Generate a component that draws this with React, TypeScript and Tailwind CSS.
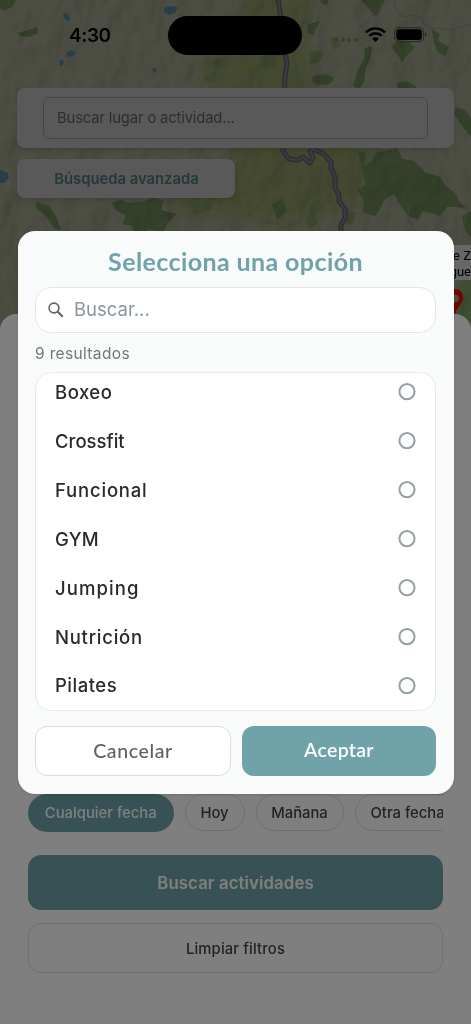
import React from 'react';

const options = ['Boxeo', 'Crossfit', 'Funcional', 'GYM', 'Jumping', 'Nutrición', 'Pilates'];

const optionSpacing: Record<string, string> = {
  Boxeo: 'tracking-[0.5px]',
  Crossfit: 'tracking-[0.02px]',
  Funcional: 'tracking-[0.8px]',
  GYM: 'tracking-[0.3px]',
  Jumping: 'tracking-[1.1px]',
  Nutrición: 'tracking-[0.75px]',
  Pilates: 'tracking-[0.5px]',
};

const MapBackground = () => (
  <svg className="absolute left-0 top-0" width="471" height="340" viewBox="0 0 471 340">
    <defs>
      <filter id="relief" x="0" y="0" width="100%" height="100%">
        <feTurbulence type="fractalNoise" baseFrequency="0.035 0.025" numOctaves="3" seed="8" result="noise" />
        <feDiffuseLighting in="noise" surfaceScale="3" diffuseConstant="1.08" lightingColor="#ffffff">
          <feDistantLight azimuth="215" elevation="60" />
        </feDiffuseLighting>
      </filter>
      <filter id="soft" x="-20%" y="-20%" width="140%" height="140%">
        <feGaussianBlur stdDeviation="9" />
      </filter>
    </defs>
    <rect width="471" height="340" fill="#9b9e88" />
    <g filter="url(#soft)" fill="#8a9562">
      <path d="M250 -10h60l-5 60 15 45 60 60-5 40-60 25-55 5-40-20 10-55-10-70z" />
      <path d="M200 55h60v35h-55zM165 165h80v50h-70z" />
    </g>
    <path d="M0 190l18-5v140H0zM455 250h16v75h-16z" fill="#829468" opacity=".2" />
    {/* woodland */}
    <g fill="#6b8356">
      <path d="M0 0h16l-3 6-8 5-5-2zM17 33l12-3 8-3 1 6-9 4-8-1z" />
      <path d="M361 0h24l-4 9-5 8-6-7zM308 24l12-3-4 8-3 6-6-2zM320 0h8l-1 5-5-1z" />
      <path d="M365 48l7-2-2 14-4 7-2 15-5 7-6-3 4-15 7-12zM391 47l7-7 11 2 6 5-7 7-6 9-4-8zM431 28l9 6-2 7 11 6-4 9-8-5-3-9z" />
      <path d="M313 76l13-2 8 4-4 6-11 1-8-4zM397 83l10-2 9 5v4h-19zM456 107l9 3 6 8v18l-9-10-8-13z" />
      <path d="M358 151l8 2-2 14 8-6 4-8 12-3 9-2 6 11 11 2 11 11 15 5 5 8 10 8 4 8 8 8-11-2-9 0-7 9-17-5-5 9-10-4-6-8-8-14-10 6-4 9-5 7-12-3 1-13-7-10 9-5z" />
      <path d="M36 202l13 4 8 12 4 12-7-2-8-12-10-8zM111 203l10-3 8 3 16-2 8-4 11 4-3 9 16 4-9 9-5 9-15-3-6 10-6-4-4-9-10-2 4-9-9-4z" />
      <path d="M272 205l11-7 4 13-10 8zM462 216l9-5v26l-6-6z" />
      <path d="M457 285l14-9v45h-14z" fill="#82a168" />
    </g>
    <g fill="#7f9160">
      <path d="M212 61l11-3 7 7-10 5zM258 56l14 0 6 9-11 5zM203 76l15-5 9 8-18 4zM287 72l10-8 3 11-10 8zM310 50l14 3-4 9-11 3zM330 38l8-2 3 10-8 4z" />
      <path d="M312 203l8-4 2 9-8 8 4 6-8 7-5-8zM190 205l14-5 10 8-19 8zM345 210l12 3-5 12-9-3z" />
    </g>
    {/* minor roads */}
    <g fill="none" stroke="#85888c" strokeWidth="1">
      <path d="M395 0c-1 9 4 17 11 17 5-3 10-1 15 1 2 10 9 10 18 10l10 2 22-6M358 27l8-4 5-8 7 1 4-14" />
      <path d="M228 75l12 1 9 2 8-2 15 1 10-4M248 215l10 3 8 5 9-1 10 6M409 205l-1 12 7 14M465 198l2 14-4 18" />
    </g>
    <rect width="471" height="340" filter="url(#relief)" style={{ mixBlendMode: 'multiply' }} />
    {/* lakes */}
    <g fill="#527d90">
      <path d="M164 8l6-2 8 1-3 6-7 2-4-3zM63 14l4-1 3 5-1 4-5-4zM66 53l5-3 5 2-3 4-6 1zM59 60l4 0 1 4-4 2zM152 69l3-1 2 4-4 0zM0 170l8 3 1 5-5 5H0z" />
    </g>
    {/* main road */}
    <g fill="none" strokeLinejoin="round">
      <path d="M278 -2l2 14 5 41 2 10-2 15-1 14-1 59 6 8 9 1 5-3 7 6 3-5-3-7 3-2 11 5 7 8v6l4 9v11l4 7v6l6 8v9l-4 7v14" stroke="#595b66" strokeWidth="5" />
      <path d="M278 -2l2 14 5 41 2 10-2 15-1 14-1 59 6 8 9 1 5-3 7 6 3-5-3-7 3-2 11 5 7 8v6l4 9v11l4 7v6l6 8v9l-4 7v14" stroke="#757783" strokeWidth="2.4" />
    </g>
    {/* pin */}
    <path
      d="M455 289c5 0 8 4 8 8.500 0 6.500-8 10-8 20-1-10-8-13.500-8-20 0-4.500 3-8.500 8-8.500zm0 5.500a4 4 0 1 0 0 8 4 4 0 0 0 0-8z"
      fill="#f00000"
      fillRule="evenodd"
    />
  </svg>
);

const StatusBar = () => (
  <div className="absolute left-0 top-0 z-20 flex h-[70px] w-full items-center">
    <span className="ml-[69px] w-[100px] font-[Inter] text-[19px] font-semibold leading-none tracking-[-0.4px] text-black">4:30</span>
    <div className="-ml-px h-[39px] w-[134px] rounded-full bg-black" />
    <div className="ml-8 mt-[10px] flex gap-[2.500px]">
      {[0, 1, 2, 3].map((i) => (
        <span key={i} className="h-[4px] w-[4px] rounded-full bg-[#3a3d33]" />
      ))}
    </div>
    <svg className="ml-[7px] -mt-px" width="21" height="16" viewBox="0 0 21 16">
      <g fill="none" stroke="#000" strokeWidth="2.700">
        <path d="M1 5.400a13.500 13.500 0 0 1 19 0" />
        <path d="M4.300 8.900a8.800 8.800 0 0 1 12.400 0" />
      </g>
      <path d="M7.200 11.700a4.700 4.700 0 0 1 6.600 0L10.500 15z" />
    </svg>
    <svg className="ml-2 -mt-px" width="34" height="16" viewBox="0 0 34 16">
      <rect x=".6" y=".6" width="29" height="14" rx="4.500" fill="none" stroke="#2b2e26" strokeWidth="1.100" />
      <rect x="2.300" y="2.300" width="25.600" height="10.600" rx="3" />
      <path d="M31 5.300c2 .8 2 4 0 4.800z" fill="#2b2e26" />
    </svg>
  </div>
);

const FilterScreen = () => (
  <div className="relative h-full w-full font-[Inter]">
    <MapBackground />

    <div className="relative flex h-[314px] flex-col items-start pl-[17px] pr-[17px] pt-[88px]">
      <div className="h-[60px] w-full rounded-lg bg-[#b2b2b2] px-[26px] pt-[9px] shadow-md">
        <div className="flex h-[42px] items-center rounded-md border border-[#8c8c8c] px-[13px] text-[14.8px] tracking-[-0.15px] text-[#5c5c5c]">
          Buscar lugar o actividad...
        </div>
      </div>
      <button className="mt-[11px] h-[39px] w-[218px] rounded-lg bg-[#b2b2b2] pl-px pt-px text-[14.8px] font-semibold text-[#4a7074] shadow-md">
        Búsqueda avanzada
      </button>
      {/* callout of the selected place */}
      <div className="absolute right-0 top-[245px] h-[35px] w-[60px] overflow-hidden bg-[#cfcfcf] text-right text-[13px] leading-[15.5px] text-black">
        <div className="pt-[3px] font-[Roboto]">de Z</div>
        <div className="font-[Roboto]">ague</div>
      </div>
    </div>

    <div className="relative flex h-[710px] flex-col justify-end rounded-t-2xl bg-white px-7 pb-[51px]">
      <div className="flex gap-[11px] overflow-hidden whitespace-nowrap text-[14.8px] font-medium text-[#444]">
        <div className="flex h-[38px] w-[145.5px] shrink-0 items-center justify-center rounded-full bg-[#6fa3a9] text-white">
          Cualquier fecha
        </div>
        <div className="flex h-[37px] w-[60px] shrink-0 items-center justify-center rounded-full border border-[#dedede] pt-0.5">Hoy</div>
        <div className="flex h-[37px] w-[88px] shrink-0 items-center justify-center rounded-full border border-[#dedede] pt-0.5">Mañana</div>
        <div className="flex h-[37px] w-[110px] shrink-0 items-center rounded-full border border-[#dedede] pl-[15px] pt-0.5">Otra fecha</div>
      </div>
      <button className="mt-[23px] h-[55px] shrink-0 rounded-[13px] bg-[#6fa3a9] pt-0.5 text-[16.8px] font-semibold tracking-[0.1px] text-white">
        Buscar actividades
      </button>
      <button className="mt-[13px] h-[50px] shrink-0 rounded-[13px] border border-[#e2e2e2] pt-0.5 text-[14.8px] font-medium tracking-[0.15px] text-[#444]">
        Limpiar filtros
      </button>
    </div>
  </div>
);

const OptionsModal = () => (
  <div className="absolute inset-0 flex items-center justify-center bg-black/50 font-[Inter]">
    <div className="flex h-[563px] w-[436px] flex-col rounded-[17px] bg-[#f9fbfa] px-[17.5px] pt-[13px] shadow-sm">
      <h1 className="h-[34px] text-center font-[Lato] text-[25px] font-bold leading-[34px] tracking-[0.4px] text-[#6fa3a9]">
        Selecciona una opción
      </h1>

      <div className="mt-[9px] flex h-[46px] items-center rounded-2xl border border-[#e3e7e6] bg-white pl-[11px]">
        <svg width="18" height="18" viewBox="0 0 18 18" fill="none" stroke="#5c6463" strokeWidth="1.600">
          <circle cx="7" cy="7" r="4.900" />
          <path d="M10.500 10.500l5.200 5.200" strokeWidth="2" />
        </svg>
        <span className="ml-[9px] text-[18.500px] text-[#89979a]">Buscar...</span>
      </div>

      <p className="mt-[11px] h-5 text-[15.5px] leading-5 tracking-[0.35px] text-[#6d7a7b]">9 resultados</p>

      <div className="mt-2 h-[339.5px] overflow-hidden rounded-2xl border border-[#e3eae9] bg-white pl-[19px] pr-[19px]">
        <ul className="-mt-[4.500px]">
          {options.map((option) => (
            <li key={option} className="flex h-[48.900px] items-center justify-between">
              <span className={`pt-px text-[18.500px] font-medium text-[#292b2b] ${optionSpacing[option]}`}>{option}</span>
              <svg width="18" height="18" viewBox="0 0 18 18">
                <circle cx="9" cy="8.600" r="7.600" fill="none" stroke="#94a0a2" strokeWidth="2" />
              </svg>
            </li>
          ))}
        </ul>
      </div>

      <div className="mt-[14.5px] flex gap-[11px]">
        <button className="h-[50px] w-[196px] rounded-xl border border-[#d7dddc] bg-white font-[Lato] text-[19.5px] font-medium tracking-[0.6px] text-[#5c6262]">
          Cancelar
        </button>
        <button className="h-[50px] flex-1 rounded-xl bg-[#6fa3a9] pb-[2px] font-[Lato] text-[19.5px] font-semibold tracking-[0.3px] text-white">
          Aceptar
        </button>
      </div>
    </div>
  </div>
);

const App = () => {
  return (
    <main className="relative h-[1024px] w-full overflow-hidden bg-white">
      <FilterScreen />
      <OptionsModal />
      <StatusBar />
    </main>
  );
};

export default App;
